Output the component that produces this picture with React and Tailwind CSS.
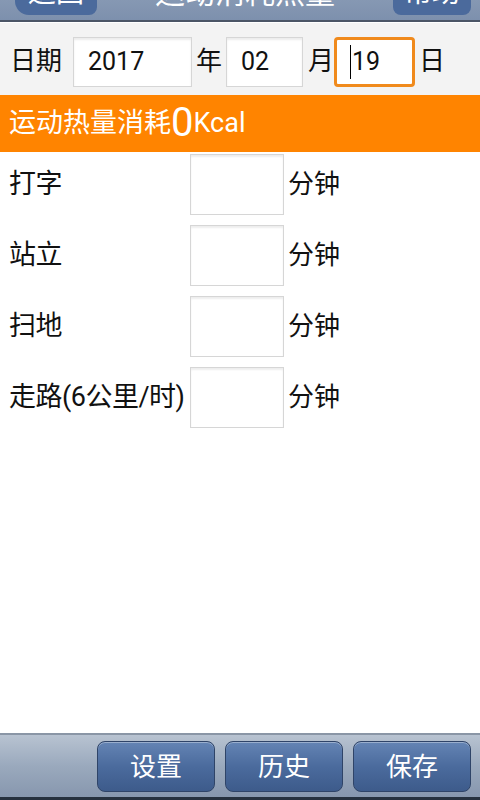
import React from 'react';

const font = { fontFamily: 'Roboto, "Noto Sans CJK SC", sans-serif' };

const activities = ['打字', '站立', '扫地', '走路(6公里/时)'];

function Field({ value, className = '', focused = false }) {
  return (
    <div
      className={`h-[50px] flex items-center bg-white ${
        focused
          ? 'border-[3px] border-[#f08a1c] rounded-[4px] pl-[13px]'
          : 'border border-[#d6d6d6] shadow-[inset_0_2px_2px_rgba(0,0,0,0.08)] pl-[14px]'
      } ${className}`}
    >
      {focused && <span className="w-px h-[34px] bg-black mr-px" />}
      <span className="text-[25px] leading-none text-[#111]">{value}</span>
    </div>
  );
}

function BarButton({ label }) {
  return (
    <button className="w-[118px] h-[51px] rounded-[8px] border border-[#2f4468] bg-gradient-to-b from-[#6484b4] via-[#4b6b9d] to-[#3d5b8b] shadow-[inset_0_1px_0_rgba(255,255,255,0.35)] text-white text-[26px] leading-none">
      {label}
    </button>
  );
}

export default function App() {
  return (
    <div className="w-[480px] h-[800px] overflow-hidden flex flex-col bg-white" style={font}>
      {/* title bar, mostly scrolled off the top */}
      <div className="shrink-0 h-[66px] -mt-[44px] flex items-center justify-between px-[15px] pr-[9px] bg-gradient-to-b from-[#9aaac0] to-[#7d90ad] border-b-2 border-[#4b5566]">
        <div className="h-[44px] w-[82px] mt-[10px] rounded-[8px] rounded-l-[14px] bg-[#4b6a9c] text-white text-[28px] leading-none flex items-center justify-center">
          返回
        </div>
        <div className="text-white text-[30px] leading-none mt-[10px]">运动消耗热量</div>
        <div className="h-[44px] w-[78px] mt-[10px] rounded-[8px] bg-[#4b6a9c] text-white text-[28px] leading-none flex items-center justify-center">
          帮助
        </div>
      </div>

      {/* date row */}
      <div className="shrink-0 h-[73px] bg-[#f3f3f3] border-t border-white flex items-center pl-[10px] pt-[5px] text-[26px] text-[#111]">
        <span className="w-[63px]">日期</span>
        <Field value="2017" className="w-[119px]" />
        <span className="w-[34px] pl-[4px]">年</span>
        <Field value="02" className="w-[77px]" />
        <span className="w-[31px] pl-[5px]">月</span>
        <Field value="19" className="w-[81px]" focused />
        <span className="pl-[4px]">日</span>
      </div>

      {/* total calories */}
      <div className="shrink-0 h-[57px] bg-[#ff8400] flex items-center pl-[9px] text-white text-[27px]">
        <span>运动热量消耗</span>
        <span className="text-[40px] leading-none -mt-[2px]">0</span>
        <span>Kcal</span>
      </div>

      {/* activity rows */}
      <div className="flex flex-col gap-[10px] pt-[2px]">
        {activities.map((name) => (
          <div key={name} className="flex items-center text-[27px] text-[#111]">
            <span className="w-[190px] pl-[9px] whitespace-nowrap tracking-[-0.5px]">{name}</span>
            <div className="w-[94px] h-[61px] bg-white border border-[#d6d6d6] shadow-[inset_0_2px_2px_rgba(0,0,0,0.07)]" />
            <span className="pl-[4px] text-[26px]">分钟</span>
          </div>
        ))}
      </div>

      <div className="flex-1" />

      {/* bottom toolbar */}
      <div className="shrink-0 h-[67px] border-t-2 border-[#8a96a6] bg-gradient-to-b from-[#b8c3d1] via-[#9aa9bd] to-[#8797ae] border-b-[3px] border-b-[#26313f] flex items-center justify-end gap-[10px] pr-[9px] pt-[1px]">
        <BarButton label="设置" />
        <BarButton label="历史" />
        <BarButton label="保存" />
      </div>
    </div>
  );
}
